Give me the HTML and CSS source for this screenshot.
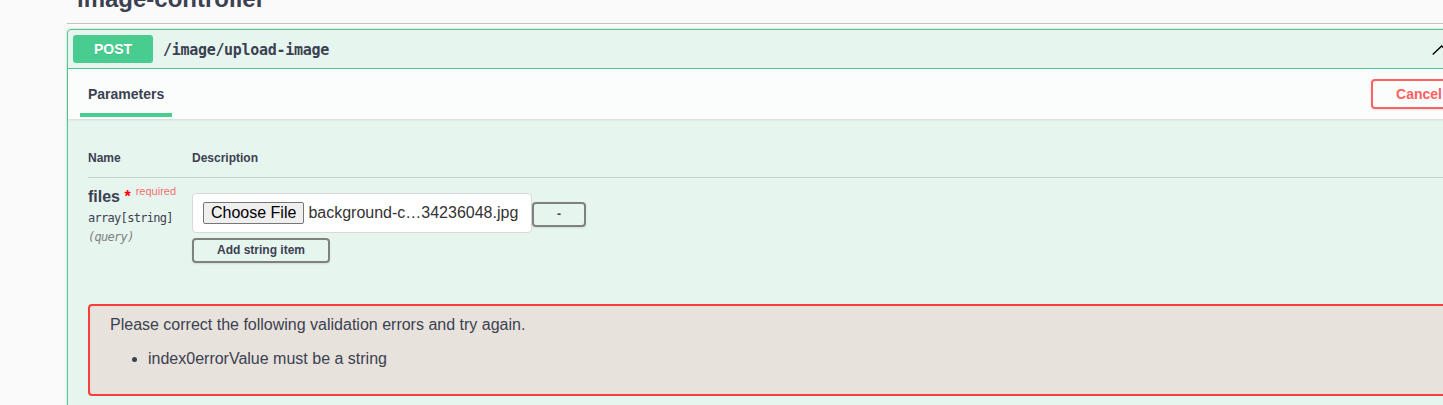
FILE: index.html
```html
<!DOCTYPE html>
<html lang="en">
<head>
<meta charset="utf-8">
<title>image-controller</title>
<link rel="stylesheet" href="styles.css">
</head>
<body>
<div class="page">
  <section class="tag-section">
    <h3 class="opblock-tag">image-controller</h3>
    <div class="opblock">
      <div class="summary">
        <span class="method">POST</span>
        <span class="path">/image/upload-image</span>
        <svg class="arrow" width="20" height="11" viewBox="0 0 20 11" aria-hidden="true"><polyline points="0.7,9.6 9.7,1 18.7,9.6" fill="none" stroke="#000" stroke-width="1.4"/></svg>
      </div>
      <div class="opblock-body">
        <div class="section-header">
          <div class="tab">
            <h4>Parameters</h4>
            <div class="tab-line"></div>
          </div>
          <button class="btn cancel">Cancel</button>
        </div>
        <div class="table-container">
          <table class="parameters">
            <thead>
              <tr><th class="col-name">Name</th><th>Description</th></tr>
            </thead>
            <tbody>
              <tr>
                <td class="col-name">
                  <div class="param-name">files<span class="star">&nbsp;*</span><span class="req">required</span></div>
                  <div class="param-type">array[string]</div>
                  <div class="param-in">(query)</div>
                </td>
                <td>
                  <div class="desc">
                    <div class="item-row">
                      <div class="file-input"><span class="file-btn">Choose File</span><span class="file-name">background-c…34236048.jpg</span></div>
                      <button class="btn btn-sm remove">-</button>
                    </div>
                    <button class="btn btn-sm">Add string item</button>
                  </div>
                </td>
              </tr>
            </tbody>
          </table>
        </div>
        <div class="errors">
          <h4>Please correct the following validation errors and try again.</h4>
          <ul><li>index0errorValue must be a string</li></ul>
        </div>
      </div>
    </div>
  </section>
</div>
</body>
</html>
```

FILE: styles.css
```css
html, body {
  margin: 0;
  overflow: hidden;
  background: #fafafa;
}
body {
  font-family: "Liberation Sans", Arial, sans-serif;
  color: #3b4151;
}
button {
  font-family: inherit;
}
.page {
  padding-left: 67px;
}
.tag-section {
  width: 1421px;
}
.opblock-tag {
  margin: -25px 0 5px;
  padding: 10px 20px 10px 10px;
  font-size: 24px;
  line-height: 28px;
  font-weight: 700;
  border-bottom: 1px solid rgba(59, 65, 81, .3);
}
.opblock {
  border: 1px solid #49cc90;
  border-radius: 4px;
  background: rgba(73, 204, 144, .1);
  box-shadow: 0 0 3px rgba(0, 0, 0, .19);
}
.summary {
  display: flex;
  align-items: center;
  padding: 5px;
  border-bottom: 1px solid #49cc90;
}
.method {
  min-width: 80px;
  padding: 6px 0;
  font-size: 14px;
  line-height: 16px;
  font-weight: 700;
  text-align: center;
  background: #49cc90;
  color: #fff;
  border-radius: 3px;
  text-shadow: 0 1px 0 rgba(0, 0, 0, .1);
}
.path {
  flex: 1;
  padding: 2px 10px 0;
  font-family: "DejaVu Sans Mono", monospace;
  font-weight: 700;
  font-size: 15px;
  letter-spacing: -0.3px;
  color: #3b4151;
}
.arrow {
  margin: 2px 30px 0 0;
}
.section-header {
  display: flex;
  justify-content: space-between;
  height: 50px;
  padding: 0 20px;
  background: rgba(255, 255, 255, .8);
  box-shadow: 0 1px 2px rgba(0, 0, 0, .1);
}
.tab {
  display: flex;
  flex-direction: column;
  align-items: center;
  padding-top: 17px;
}
.tab h4 {
  margin: 0;
  font-size: 14px;
  line-height: 16px;
  font-weight: 700;
}
.tab-line {
  flex: none;
  width: 120%;
  height: 4px;
  margin-top: 11px;
  background: #49cc90;
}
.btn {
  font-size: 14px;
  line-height: 16px;
  font-weight: 700;
  padding: 5px 23px;
  border: 2px solid gray;
  border-radius: 4px;
  background: transparent;
  color: #3b4151;
  box-shadow: 0 1px 2px rgba(0, 0, 0, .1);
}
.cancel {
  align-self: center;
  border-color: #ff6060;
  color: #ff6060;
}
.btn-sm {
  font-size: 12px;
  line-height: 13px;
  padding: 4px 23px;
}
.table-container {
  padding: 20px;
}
.parameters {
  width: 100%;
  border-collapse: separate;
  border-spacing: 0;
}
.parameters th {
  text-align: left;
  font-size: 12px;
  line-height: 14px;
  font-weight: 700;
  padding: 12px 0;
  border-bottom: 1px solid rgba(59, 65, 81, .2);
}
.parameters td {
  padding: 10px 0 0;
  vertical-align: top;
}
.col-name {
  width: 104px;
}
.param-name {
  font-size: 16px;
  line-height: 18px;
  font-weight: 700;
}
.star {
  color: red;
}
.req {
  font-size: 11px;
  font-weight: 400;
  line-height: 0;
  padding-left: 5px;
  vertical-align: 7px;
  color: rgba(255, 0, 0, .6);
}
.param-type {
  padding: 5px 0;
  font-family: "DejaVu Sans Mono", monospace;
  font-size: 12px;
  letter-spacing: -0.7px;
  line-height: 14px;
}
.param-in {
  font-family: "DejaVu Sans Mono", monospace;
  font-size: 12px;
  letter-spacing: -0.7px;
  line-height: 14px;
  font-style: italic;
  color: gray;
}
.desc {
  display: flex;
  flex-direction: column;
  align-items: flex-start;
}
.item-row {
  display: flex;
  align-items: flex-start;
}
.file-input {
  display: flex;
  align-items: center;
  box-sizing: border-box;
  width: 340px;
  margin: 5px 0;
  padding: 8px 10px;
  border: 1px solid #d9d9d9;
  border-radius: 4px;
  background: #fff;
  font-size: 16px;
}
.file-btn {
  padding: 1px 7px;
  line-height: 18px;
  border: 1px solid #767676;
  border-radius: 2px;
  background: #efefef;
  color: #000;
  margin-right: 4px;
}
.file-name {
  color: #333;
  white-space: nowrap;
}
.remove {
  margin-top: 14px;
}
.errors {
  margin: 21px 20px 20px;
  padding: 10px 20px;
  border: 2px solid #f93e3e;
  border-radius: 4px;
  background: rgba(249, 62, 62, .1);
}
.errors h4 {
  margin: 0;
  font-size: 16px;
  line-height: 18px;
  font-weight: 400;
}
.errors ul {
  margin: 16px 0 16px;
  padding-left: 38px;
  font-size: 16px;
  line-height: 18px;
}
```
